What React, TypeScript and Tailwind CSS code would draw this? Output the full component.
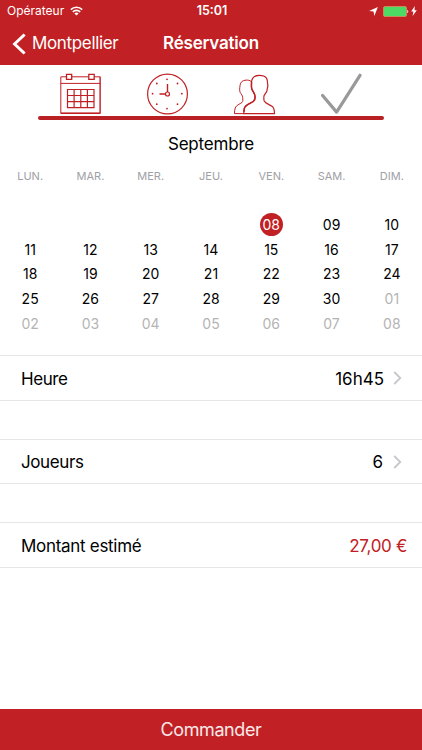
import React from 'react';
import clsx from 'clsx';

const WEEKDAYS = ['LUN.', 'MAR.', 'MER.', 'JEU.', 'VEN.', 'SAM.', 'DIM.'];

const WEEKS: string[][] = [
  ['', '', '', '', '08', '09', '10'],
  ['11', '12', '13', '14', '15', '16', '17'],
  ['18', '19', '20', '21', '22', '23', '24'],
  ['25', '26', '27', '28', '29', '30', '01'],
  ['02', '03', '04', '05', '06', '07', '08'],
];

// First cell of October, counted from the top left of the grid
const NEXT_MONTH_START = 27;
const SELECTED = 4;

function StatusBar() {
  return (
    <div className="flex h-[22px] items-center justify-between pl-[7px] pr-[5px] text-[12px] text-white">
      <div className="flex flex-1 items-center gap-[6px]">
        <span>Opérateur</span>
        <svg width="13" height="10" viewBox="0 0 13 10" fill="none" stroke="currentColor" strokeWidth="1.6">
          <path d="M0.8 3.6a8.2 8.2 0 0 1 11.4 0" />
          <path d="M2.8 5.9a5.3 5.3 0 0 1 7.4 0" />
          <path d="M6.5 9.5 4.4 7.5a3 3 0 0 1 4.2 0z" fill="currentColor" stroke="none" />
        </svg>
      </div>
      <span className="pt-px text-[12.5px] font-semibold">15:01</span>
      <div className="flex flex-1 items-center justify-end">
        <svg width="9" height="9" viewBox="0 0 9 9" fill="currentColor" className="mr-[5px]">
          <path d="M8.9 0.1 5.3 8.9 4.6 4.6 0.1 4.1z" />
        </svg>
        <svg width="26" height="11" viewBox="0 0 26 11" className="mr-[2px]">
          <rect x="0.5" y="0.5" width="23" height="10" rx="1.5" fill="#4cd964" stroke="#c88a5c" />
          <path d="M24.3 3.8c1.3.5 1.3 2.9 0 3.4z" fill="#fff" />
        </svg>
        <svg width="6" height="10" viewBox="0 0 6 10" fill="currentColor">
          <path d="M3.8 0 0.2 5.6h2.2L1.6 10 5.8 4.2H3.5z" />
        </svg>
      </div>
    </div>
  );
}

function CalendarIcon() {
  return (
    <svg width="42" height="42" viewBox="0 0 42 42" fill="none" stroke="#c02024">
      <path d="M6.5 3.8H0.8V40.5H40.3V3.8H34.5M12 3.8H28.5M0.8 10.4H40.3" />
      <path d="M1 39.5H40M39.7 4V40" strokeWidth="0.6" />
      <path d="M6.5 1.4H11.7V6.4H6.5zM28.8 1.4H34.2V6.4H28.8z" strokeWidth="1.3" />
      <path d="M7.5 16.5H34V34.6H7.5zM14.1 16.5V34.6M20.8 16.5V34.6M27.4 16.5V34.6M7.5 22.5H34M7.5 28.6H34" strokeWidth="1.2" />
    </svg>
  );
}

function ClockIcon() {
  return (
    <svg width="42" height="42" viewBox="0 0 42 42" fill="none" stroke="#c02024">
      <circle cx="20.5" cy="21" r="19.9" strokeWidth="1.2" />
      <path d="M20.5 19V11M18.5 21H12.5" strokeWidth="1.4" />
      <circle cx="20.5" cy="21" r="2" strokeWidth="1.2" />
      <g fill="#c02024" stroke="none">
        <circle cx="20" cy="6.3" r="0.9" />
        <circle cx="30.5" cy="10.5" r="0.9" />
        <circle cx="34.8" cy="20.7" r="0.9" />
        <circle cx="30.5" cy="31.2" r="0.9" />
        <circle cx="20" cy="35.6" r="0.9" />
        <circle cx="9.8" cy="31.2" r="0.9" />
        <circle cx="5.6" cy="20.7" r="0.9" />
        <circle cx="9.8" cy="10.5" r="0.9" />
      </g>
    </svg>
  );
}

function PlayersIcon() {
  return (
    <svg width="42" height="42" viewBox="0 0 42 42" fill="none" stroke="#c02024" strokeLinejoin="round">
      <path d="M17.3 8.6C15.8 7.3 14 7 12 7.1C8.6 7.3 6.3 9 6 12.6C5.8 15 5.2 17.4 6.2 19.4C7.2 21.2 8.7 22.6 8.7 24.5C8.7 26.5 9.3 28.3 8 29.4C5.8 31.2 2.2 32 1.2 35C0.7 36.7 0.5 38.6 0.4 40.6H9.8" />
      <path d="M25.5 2.3C20.5 2.3 17.7 4.8 17.5 9.3C17.5 11.8 17 14.6 18 16.5C19.2 19 21 20.5 21.1 23.7C21.1 26 20.6 27.6 19.3 28.5C16 30.8 11.5 31.6 10.4 35.2C9.9 37 9.8 38.8 9.7 40.6H40.5C40.3 37.5 40.5 35 38 33.3C35.2 31.4 31.5 30.6 30.2 28C29.6 26.4 29.8 24.5 30 22.8C31.3 20.4 33.3 18.8 33.2 16.3C33.3 14.8 34.2 13.3 33.7 11.3C33.2 9.3 34 7.2 32.3 4.9C30.8 3 28.4 2.3 25.5 2.3z" strokeWidth="1.2" />
      <path d="M17.6 9C17.5 11.8 17 14.6 18 16.5C19.2 19 21 20.5 21.1 23.7C21.1 26 20.6 27.6 19.3 28.5C16 30.8 11.5 31.6 10.4 35.2L9.9 39" strokeWidth="1.5" />
    </svg>
  );
}

function CheckIcon() {
  return (
    <svg width="42" height="42" viewBox="0 0 42 42" fill="none" stroke="#999" strokeWidth="3.2" strokeLinecap="round" strokeLinejoin="round">
      <path d="M1.6 22.5 15.6 39.1 39 2.3" />
    </svg>
  );
}

function Chevron() {
  return (
    <svg width="9" height="14" viewBox="0 0 9 14" fill="none" stroke="#c7c7cc" strokeWidth="1.8">
      <path d="M1.2 1 7.3 7 1.2 13" />
    </svg>
  );
}

function Calendar() {
  return (
    <section className="flex h-[235px] flex-col">
      <h2 className="h-[48px] text-center text-[17px] leading-[48px] tracking-[-0.2px]">Septembre</h2>
      <div className="grid h-[16px] grid-cols-7 text-center text-[11px] leading-[16px] text-[#a0a0a4]">
        {WEEKDAYS.map((day) => (
          <span key={day}>{day}</span>
        ))}
      </div>
      <div className="mt-[28.5px] grid grid-cols-7 text-[14px]">
        {WEEKS.flat().map((day, index) => (
          <div
            key={index}
            className={clsx(
              'flex h-[24.6px] items-center justify-center',
              index >= NEXT_MONTH_START && 'text-[#b4b4b4]',
            )}
          >
            <span
              className={clsx(
                'flex size-[23px] items-center justify-center rounded-full',
                index === SELECTED && 'bg-[#c12124] text-white',
              )}
            >
              {day}
            </span>
          </div>
        ))}
      </div>
    </section>
  );
}

export default function App() {
  return (
    <div className="flex h-[750px] w-[422px] flex-col overflow-hidden bg-white font-['Inter',sans-serif] text-[17px] text-black">
      <header className="h-[65px] bg-[#c12124] text-white">
        <StatusBar />
        <div className="flex h-[43px] items-center pl-[12px]">
          <svg width="14" height="22" viewBox="0 0 14 22" fill="none" stroke="currentColor" strokeWidth="3">
            <path d="M12.6 1.5 2.6 11l10 9.5" />
          </svg>
          <span className="ml-[6px] w-[131px] tracking-[-0.35px]">Montpellier</span>
          <h1 className="font-semibold tracking-[-0.2px]">Réservation</h1>
        </div>
      </header>

      <nav className="flex h-[55px] flex-col px-[38px] pt-[8px]">
        <div className="flex gap-[45px] pl-[22px]">
          <CalendarIcon />
          <ClockIcon />
          <PlayersIcon />
          <CheckIcon />
        </div>
        <div className="mt-[1px] h-[4px] w-[346px] shrink-0 rounded-full bg-[#b92023]" />
      </nav>

      <Calendar />

      <div className="flex h-[46px] items-center border-y border-[#e6e6e6] pl-[21px] pr-[20px]">
        <span className="flex-1 pt-[3px] tracking-[-0.45px]">Heure</span>
        <span className="mr-[9px] pt-[3px]">16h45</span>
        <Chevron />
      </div>
      <div className="mt-[38px] flex h-[45px] items-center border-y border-[#e6e6e6] pl-[21px] pr-[20px]">
        <span className="flex-1 pt-[3px] tracking-[-0.4px]">Joueurs</span>
        <span className="mr-[10px] pt-[3px]">6</span>
        <Chevron />
      </div>
      <div className="mt-[38px] flex h-[46px] items-center border-y border-[#e6e6e6] pl-[21px] pr-[15px]">
        <span className="flex-1 pt-[3px] tracking-[-0.3px]">Montant estimé</span>
        <span className="pt-[3px] tracking-[-0.3px] text-[#c12124]">27,00 €</span>
      </div>

      <button className="mt-auto h-[41px] bg-[#c12124] text-[18px] tracking-[-0.4px] text-[#fbe9e9]">
        Commander
      </button>
    </div>
  );
}
